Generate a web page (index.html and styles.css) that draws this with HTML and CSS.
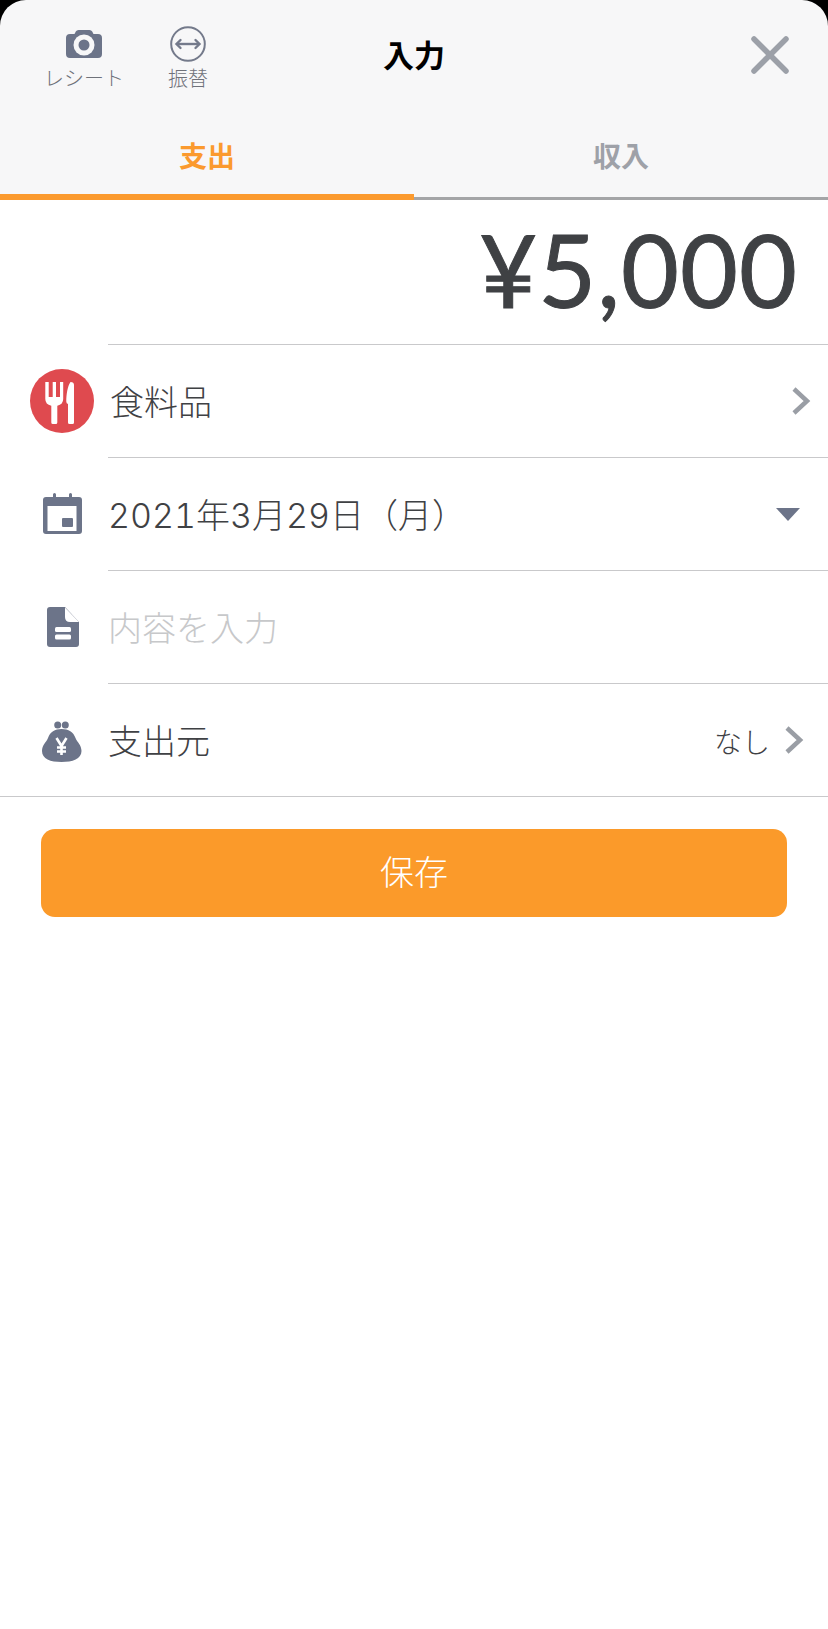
FILE: index.html
```html
<!DOCTYPE html>
<html lang="ja">
<head>
<meta charset="utf-8">
<title>入力</title>
<link rel="stylesheet" href="styles.css">
</head>
<body>
<div class="frame">
  <div class="head-wrap">
  <header class="sheet-head">
    <div class="top">
      <div class="tool tool-receipt">
        <svg class="tool-icon" width="40" height="36" viewBox="0 0 40 36"><path class="fill-slate" d="M6 8h4.500l1.300-2.500Q12.600 4 14.500 4h11q1.900 0 2.700 1.500L29.500 8H34q4 0 4 4v16q0 4-4 4H6q-4 0-4-4V12q0-4 4-4z"/><circle cx="20" cy="19" r="10.500" fill="#f7f7f8"/><circle cx="20" cy="19" r="5.500" class="fill-slate"/></svg>
        <span class="tool-label">レシート</span>
      </div>
      <div class="tool tool-transfer">
        <svg class="tool-icon" width="38" height="36" viewBox="0 0 38 36"><circle cx="19" cy="18" r="16.800" fill="none" stroke="#747a8b" stroke-width="2"/><path d="M8 18h22" stroke="#747a8b" stroke-width="2.400"/><path d="M11.500 14 7.500 18l4 4M26.500 14l4 4-4 4" fill="none" stroke="#747a8b" stroke-width="2.400" stroke-linecap="round"/></svg>
        <span class="tool-label">振替</span>
      </div>
      <h1 class="title">入力</h1>
      <svg class="close" width="40" height="40" viewBox="0 0 40 40"><path d="M4 4l32 32M36 4 4 36" stroke="#9ca0a8" stroke-width="5.500" stroke-linecap="round"/></svg>
    </div>
    <nav class="tabs">
      <div class="tab tab-on">支出</div>
      <div class="tab">収入</div>
    </nav>
  </header>
  </div>
  <main class="body">
    <div class="amount">¥5,000</div>
    <div class="row">
      <div class="slot">
        <svg width="64" height="64" viewBox="0 0 64 64"><circle cx="32" cy="32" r="32" fill="#df4a4f"/><path d="M15.300 13h3.400v15h4V13H26v15h4V13h3.200v17q0 5.500-5.900 6.700V53.500q0 1.500-1.500 1.500h-3q-1.500 0-1.500-1.500V36.700Q15.300 35.500 15.300 30z" fill="#fff"/><path d="M40.500 13q3.500 0 3.500 3V53.500q0 1.500-1.500 1.500h-3q-1.500 0-1.500-1.500V35q-1.700-.5-1.700-2.500C36.300 26 37.500 17 40.500 13z" fill="#fff"/></svg>
      </div>
      <div class="cell"><span class="label label-food">食料品</span><svg class="chev chev-end" width="20" height="30" viewBox="0 0 20 30"><path d="M3 3l13 12L3 27" fill="none" stroke="#9a9ea5" stroke-width="4.500"/></svg></div>
    </div>
    <div class="row">
      <div class="slot">
        <svg width="64" height="64" viewBox="0 0 64 64"><path class="fill-slate" d="M16 15h7v-2.500q0-1.500 1.500-1.500t1.500 1.500V15h13v-2.500q0-1.500 1.500-1.500t1.500 1.500V15h7q3 0 3 3v31q0 3-3 3H16q-3 0-3-3V18q0-3 3-3z"/><rect x="17.500" y="24" width="29" height="25" fill="#fff"/><rect x="32" y="36" width="11" height="9" rx="1" class="fill-slate"/></svg>
      </div>
      <div class="cell"><span class="label">2021年3月29日（月）</span><span class="caret"></span></div>
    </div>
    <div class="row">
      <div class="slot">
        <svg width="64" height="64" viewBox="0 0 64 64"><path class="fill-slate" d="M20 12h15l14 15v22q0 3-3 3H20q-3 0-3-3V15q0-3 3-3z"/><path d="M35 12.500V22q0 5 5 5h9z" fill="#fff"/><rect x="25" y="32" width="16" height="5" rx="1.500" fill="#fff"/><rect x="25" y="39.500" width="16" height="5" rx="1.500" fill="#fff"/></svg>
      </div>
      <div class="cell"><span class="label placeholder">内容を入力</span></div>
    </div>
    <div class="row row-last">
      <div class="slot">
        <svg width="64" height="64" viewBox="0 0 64 64"><circle cx="27.700" cy="17" r="3.500" class="fill-slate"/><circle cx="35.300" cy="17" r="3.500" class="fill-slate"/><path class="fill-slate" d="M31.500 21c7 0 12 3 14 9 1.500 4 6 7 6 13 0 8-9 11-20 11s-19.500-3-19.500-11c0-6 4.500-9 6-13 2-6 7-9 13.500-9z"/><path d="M26.500 30l5 8 5-8M31.500 38v9M27 39.500h9M27 43.500h9" fill="none" stroke="#fff" stroke-width="2.600"/></svg>
      </div>
      <div class="cell"><span class="label">支出元</span><span class="note">なし</span><svg class="chev chev-note" width="20" height="30" viewBox="0 0 20 30"><path d="M3 3l13 12L3 27" fill="none" stroke="#9a9ea5" stroke-width="4.500"/></svg></div>
    </div>
    <button class="save" type="button">保存</button>
  </main>
</div>
</body>
</html>
```
FILE: styles.css
```css
* { box-sizing: border-box; }
html, body { margin: 0; padding: 0; background: #fff; }
body { font-family: "Noto Sans CJK JP", "Noto Sans", sans-serif; color: #3f4144; }
.frame { width: 828px; height: 1629px; overflow: hidden; background: #fff; }
.fill-slate { fill: #6c7489; }

.head-wrap { background: #000; }
.sheet-head { background: #f7f7f8; border-radius: 26px 26px 0 0; }
.top { height: 116px; display: flex; position: relative; }
.tool { display: flex; flex-direction: column; align-items: center; padding-top: 26px; }
.tool-receipt { width: 76px; margin-left: 46px; }
.tool-transfer { width: 40px; margin-left: 46px; }
.tool-icon { display: block; flex: none; }
.tool-label { font-size: 20px; line-height: 28px; font-weight: 300; color: #6f727a; white-space: nowrap; margin-top: 2px; }
.title { position: absolute; left: 0; right: 0; top: 32px; margin: 0; text-align: center; font-size: 31px; line-height: 44px; font-weight: 700; color: #000; }
.close { position: absolute; right: 38px; top: 35px; }

.tabs { display: flex; height: 84px; }
.tab { flex: 1; text-align: center; font-size: 28px; line-height: 40px; padding-top: 19px; font-weight: 700; color: #9ea1a8; border-bottom: 3px solid #a4a5a7; }
.tab-on { color: #fb9a2e; border-bottom: 6px solid #fb9a2e; }

.body { background: #fff; }
.amount { height: 144px; text-align: right; padding-right: 30px; font-size: 100px; line-height: 138px; letter-spacing: 1px; color: #3f4144; -webkit-text-stroke: 1px #3f4144; font-family: Lato, "Noto Sans CJK JP", sans-serif; }
.row { display: flex; height: 113px; }
.row-last { height: 114px; border-bottom: 1px solid #c9c9cb; }
.slot { width: 108px; padding: 25px 0 0 30px; flex: none; }
.slot svg { display: block; }
.cell { flex: 1; display: flex; align-items: center; border-top: 1px solid #c9c9cb; padding: 0 26px 0 0; }
.label { font-family: Inter, "Noto Sans CJK JP", sans-serif; font-feature-settings: "tnum"; font-size: 34px; line-height: 48px; font-weight: 300; color: #3f4144; flex: 1; padding-top: 3px; }
.label-food { padding-left: 2px; }
.placeholder { color: #c7c8ca; }
.note { font-size: 28px; font-weight: 300; color: #3f4144; margin-right: 14px; padding-top: 2px; }
.chev { flex: none; }
.chev-end { margin-right: -9px; }
.chev-note { margin-right: -2px; }
.caret { width: 0; height: 0; border-left: 12px solid transparent; border-right: 12px solid transparent; border-top: 13px solid #6c7489; margin-right: 2px; }
.save { display: block; width: 746px; height: 88px; margin: 32px 0 0 41px; padding: 0 0 4px; border: 0; border-radius: 14px; background: #fb9a2a; color: #fff; font: 300 34px/48px "Noto Sans CJK JP", sans-serif; }
```
